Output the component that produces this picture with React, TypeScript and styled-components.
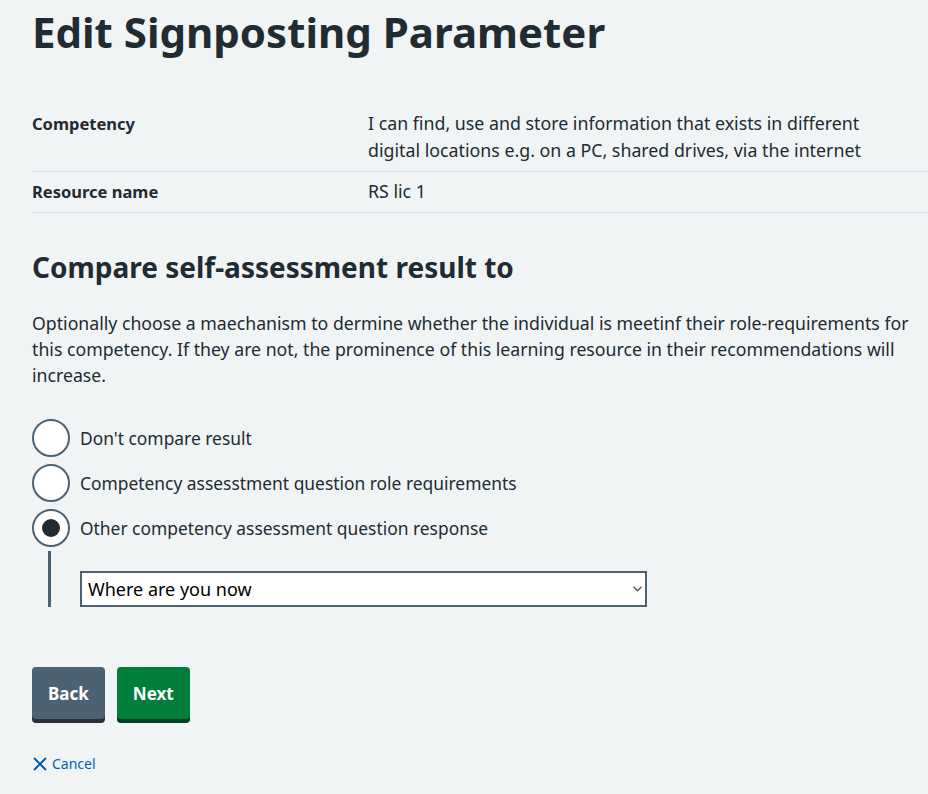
import React, { useState } from 'react';
import styled, { createGlobalStyle } from 'styled-components';

const GlobalStyle = createGlobalStyle`
  html, body {
    margin: 0;
    padding: 0;
    background: #f0f4f5;
  }
  body {
    font-family: "Noto Sans", Arial, sans-serif;
    color: #212b32;
  }
`;

const Page = styled.main`
  padding: 0 0 20px 32px;
  overflow: hidden;
`;

const Title = styled.h1`
  font-size: 42px;
  font-weight: 700;
  line-height: 1.2;
  margin: 0;
  padding-top: 7px;
  margin-bottom: 47px;
`;

const SummaryList = styled.dl`
  margin: 0 0 36px;
  font-size: 17.8px;
  line-height: 27px;
`;

const SummaryRow = styled.div`
  display: grid;
  grid-template-columns: 336px 1fr;
  border-bottom: 1px solid #d8dde0;
`;

const Key = styled.dt`
  font-weight: 700;
  font-size: 16.5px;
  padding: 6px 24px 7px 0;
`;

const Value = styled.dd`
  margin: 0;
  padding: 6px 24px 7px 0;
  max-width: 510px;
`;

const Heading = styled.h2`
  font-size: 28px;
  font-weight: 700;
  line-height: 36px;
  margin: 0 0 25px;
`;

const Hint = styled.p`
  font-size: 17.7px;
  line-height: 26px;
  margin: 0 0 31px;
`;

const Radios = styled.div`
  display: flex;
  flex-direction: column;
  gap: 7px;
`;

const RadioItem = styled.label`
  display: flex;
  align-items: center;
  gap: 10px;
  font-size: 17.4px;
  cursor: pointer;
`;

const Circle = styled.span<{ $checked: boolean }>`
  width: 34px;
  height: 34px;
  border: 2px solid #4c6272;
  border-radius: 50%;
  background: #ffffff;
  display: flex;
  align-items: center;
  justify-content: center;
  flex-shrink: 0;
  &::after {
    content: '';
    width: 18px;
    height: 18px;
    border-radius: 50%;
    background: #212b32;
    display: ${(p) => (p.$checked ? 'block' : 'none')};
  }
`;

const Conditional = styled.div`
  margin: 4px 0 0 16px;
  border-left: 3px solid #4c6272;
  padding: 20px 0 0 29px;
`;

const SelectWrap = styled.div`
  position: relative;
  width: 567px;
`;

const Select = styled.select`
  appearance: none;
  display: block;
  width: 100%;
  height: 36px;
  border: 2px solid #4c6272;
  border-radius: 0;
  background: #ffffff;
  font-family: "Noto Sans", Arial, sans-serif;
  font-size: 18px;
  color: #000000;
  padding: 0 6px;
  box-sizing: border-box;
`;

const Chevron = styled.svg`
  position: absolute;
  right: 5px;
  top: 15px;
  pointer-events: none;
`;

const Actions = styled.div`
  display: flex;
  gap: 12px;
  margin-top: 60px;
`;

const Button = styled.button<{ $variant: 'back' | 'next' }>`
  height: 52px;
  padding: 0 16px;
  border: 0;
  border-radius: 4px;
  font-family: "Noto Sans", Arial, sans-serif;
  font-size: 17px;
  font-weight: 700;
  color: #ffffff;
  background: ${(p) => (p.$variant === 'back' ? '#4c6272' : '#007f3b')};
  box-shadow: 0 4px 0 ${(p) => (p.$variant === 'back' ? '#263139' : '#00401e')};
  cursor: pointer;
`;

const CancelLink = styled.a`
  display: inline-flex;
  align-items: center;
  gap: 4px;
  margin-top: 35px;
  font-size: 14px;
  color: #005eb8;
  text-decoration: none;
`;

const options = [
  "Don't compare result",
  'Competency assesstment question role requirements',
  'Other competency assessment question response',
];

export default function App() {
  const [choice, setChoice] = useState(2);

  return (
    <Page>
      <GlobalStyle />
      <Title>Edit Signposting Parameter</Title>
      <SummaryList>
        <SummaryRow>
          <Key>Competency</Key>
          <Value>
            I can find, use and store information that exists in different digital locations e.g. on a PC,
            shared drives, via the internet
          </Value>
        </SummaryRow>
        <SummaryRow>
          <Key>Resource name</Key>
          <Value>RS lic 1</Value>
        </SummaryRow>
      </SummaryList>

      <Heading>Compare self-assessment result to</Heading>
      <Hint>
        Optionally choose a maechanism to dermine whether the individual is meetinf their role-requirements
        for this competency. If they are not, the prominence of this learning resource in their
        recommendations will increase.
      </Hint>

      <Radios>
        {options.map((label, i) => (
          <RadioItem key={label} onClick={() => setChoice(i)}>
            <Circle $checked={choice === i} />
            {label}
          </RadioItem>
        ))}
      </Radios>
      {choice === 2 && (
        <Conditional>
          <SelectWrap>
            <Select defaultValue="now">
              <option value="now">Where are you now</option>
              <option value="want">Where do you want to be</option>
            </Select>
            <Chevron width="9" height="6" viewBox="0 0 9 6" fill="none" stroke="#555555" strokeWidth="1.4">
              <path d="M0.5 0.8 L4.5 4.8 L8.5 0.8" />
            </Chevron>
          </SelectWrap>
        </Conditional>
      )}

      <Actions>
        <Button $variant="back">Back</Button>
        <Button $variant="next">Next</Button>
      </Actions>
      <CancelLink href="#">
        <svg width="16" height="16" viewBox="0 0 16 16" fill="none" stroke="#005eb8" strokeWidth="2">
          <path d="M2 2 L14 14 M14 2 L2 14" />
        </svg>
        Cancel
      </CancelLink>
    </Page>
  );
}
